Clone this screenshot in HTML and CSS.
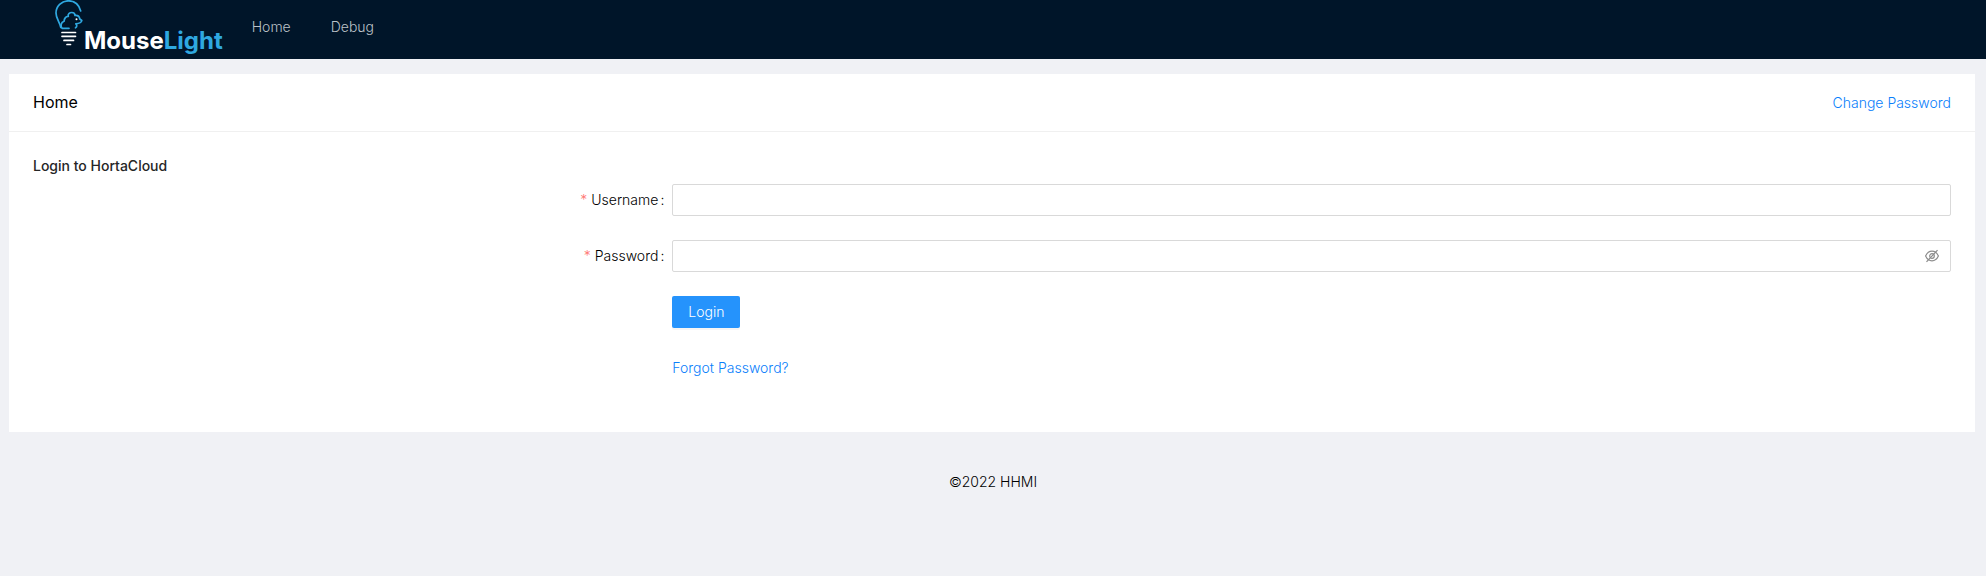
FILE: index.html
```html
<!DOCTYPE html>
<html lang="en">
<head>
<meta charset="utf-8">
<title>MouseLight</title>
<link rel="stylesheet" href="styles.css">
</head>
<body>
<header class="header">
  <a class="logo" href="#" aria-label="MouseLight">
    <svg class="logo-mark" viewBox="0 0 29 48" fill="none" stroke-linecap="round" stroke-linejoin="round" aria-hidden="true">
      <g stroke="#2fa8e0" stroke-width="1.700">
        <path d="M25.700 11C24 4.500 19.500 .8 13.500 .8C6.500 .8 1 6.500 1 13C1 18.500 4.500 21.500 5.800 27.500"/>
        <path d="M14 28.300H7C5.300 26 6 22.300 9 21.300C9.300 18.500 11 16 13.300 16.300C12.500 14 14.500 12.500 16.800 12.500C19 12.500 20 14 20 15.500C23 15.200 24.500 17 24.800 19L26.800 20.500C26.500 22.800 24 23.500 20.800 23.800C22.300 25 22 27 20.500 27.800"/>
      </g>
      <circle cx="21.500" cy="19.300" r="1" fill="#fff"/>
      <path d="M7 32.500H20.500M7 36.300H20.500M9 40.400H18.500M12 44.500H15.500" stroke="#fff" stroke-width="1.700"/>
    </svg>
    <span class="logo-text">Mouse<span class="logo-accent">Light</span></span>
  </a>
  <nav class="nav">
    <a href="#">Home</a>
    <a href="#">Debug</a>
  </nav>
</header>
<main class="card">
  <div class="card-head">
    <h1 class="card-title">Home</h1>
    <a class="link" href="#">Change Password</a>
  </div>
  <div class="card-body">
    <h2 class="form-title">Login to HortaCloud</h2>
    <form class="form">
      <label class="label" for="username"><span class="required">*</span>Username<span class="colon">:</span></label>
      <input class="field" id="username" type="text">
      <label class="label" for="password"><span class="required">*</span>Password<span class="colon">:</span></label>
      <div class="field password">
        <input class="password-input" id="password" type="password">
        <button class="eye" type="button" aria-label="Show password">
          <svg viewBox="0 0 14 14" fill="none" stroke="currentColor" stroke-width="1.200" aria-hidden="true">
            <path d="M.6 7C2 4 4.200 2.200 7 2.200S12 4 13.400 7C12 10 9.800 11.800 7 11.800S2 10 .6 7Z"/>
            <circle cx="7" cy="7" r="2.300"/>
            <path d="M1.500 12.800L12.500 1.200"/>
          </svg>
        </button>
      </div>
      <button class="submit" type="submit">Login</button>
      <a class="link forgot" href="#">Forgot Password?</a>
    </form>
  </div>
</main>
<footer class="footer">©2022 HHMI</footer>
</body>
</html>
```
FILE: styles.css
```css
* {
  box-sizing: border-box;
}

body {
  margin: 0;
  background: #f0f1f5;
  color: #000;
  font: 300 14px/22px Inter, "Liberation Sans", sans-serif;
}

a {
  text-decoration: none;
}

.header {
  display: flex;
  height: 59px;
  padding-left: 55px;
  background: #001529;
}

.logo {
  display: flex;
  align-items: flex-start;
  color: #fff;
}

.logo-mark {
  flex: none;
  width: 29px;
  height: 48px;
}

.logo-text {
  padding-top: 25px;
  font-size: 24px;
  font-weight: 700;
  line-height: 32px;
}

.logo-accent {
  color: #2fa8e0;
}

.nav {
  display: flex;
  gap: 40px;
  margin-left: 29px;
  padding-top: 16px;
}

.nav a {
  color: #bcc2c8;
}

.card {
  margin: 15px 11px 0 9px;
  background: #fff;
}

.card-head {
  display: flex;
  align-items: center;
  justify-content: space-between;
  height: 58px;
  padding: 0 24px;
  border-bottom: 1px solid #f0f0f0;
}

.card-title {
  margin: 0;
  padding-bottom: 2px;
  font-size: 16px;
  font-weight: 400;
}

.link {
  color: #0a80fb;
}

.card-body {
  padding: 24px;
}

.form-title {
  margin: 0 0 8px;
  color: #262626;
  font-size: 14px;
  font-weight: 500;
  line-height: 20px;
}

.form {
  display: grid;
  grid-template-columns: 1fr 2fr;
  row-gap: 24px;
  padding-bottom: 24px;
}

.label {
  justify-self: end;
  padding-right: 8px;
  line-height: 32px;
}

.required {
  margin-right: 4px;
  color: #ff7875;
}

.colon {
  margin-left: 2px;
}

.field {
  width: 100%;
  height: 32px;
  border: 1px solid #d9d9d9;
  border-radius: 2px;
  background: #fff;
  font: inherit;
}

input.field {
  padding: 4px 11px;
}

.password {
  display: flex;
  align-items: center;
  padding: 0 11px;
}

.password-input {
  flex: 1;
  min-width: 0;
  padding: 0;
  border: 0;
  background: none;
  font: inherit;
}

.eye {
  display: flex;
  padding: 0;
  border: 0;
  background: none;
  color: #8c8c8c;
}

.eye svg {
  width: 14px;
  height: 14px;
}

.submit {
  grid-column: 2;
  justify-self: start;
  height: 32px;
  padding: 0 16px;
  border: 0;
  border-radius: 2px;
  background: #2593fc;
  box-shadow: 0 2px 0 rgba(0, 0, 0, 0.04);
  color: #fff;
  font: inherit;
}

.forgot {
  grid-column: 2;
  justify-self: start;
  line-height: 32px;
}

.footer {
  padding: 39px 24px 24px;
  text-align: center;
}
```
